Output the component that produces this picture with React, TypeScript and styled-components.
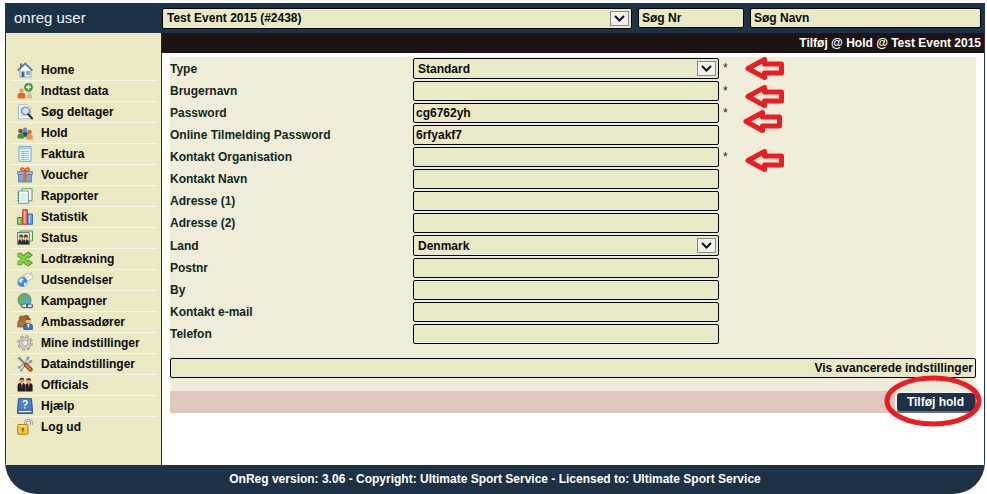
import React, { ReactNode } from "react";
import styled, { createGlobalStyle } from "styled-components";

const color = {
  navy: "#1d3247",
  bar: "#1e1414",
  side: "#ebe8c4",
  field: "#e9e9c5",
  panel: "#efecd9",
  action: "#e0c8be",
  label: "#10281f",
  ink: "#0a0a0a",
  mark: "#ec1c24",
};

const GlobalStyle = createGlobalStyle`
  *, *::before, *::after { box-sizing: border-box; }
  body {
    margin: 0;
    background: #fdfdfe;
    font-family: "Liberation Sans", Arial, sans-serif;
    font-size: 12px;
    font-weight: bold;
    color: ${color.ink};
  }
  input, select, button { font: inherit; color: inherit; }
`;

const Page = styled.div`
  min-height: 100vh;
  padding: 3px 2px 0 5px;
  display: flex;
`;

const Shell = styled.div`
  flex: 1;
  display: flex;
  flex-direction: column;
  background: ${color.navy};
  border-radius: 0 0 32px 32px;
  overflow: hidden;
`;

const Header = styled.header`
  display: grid;
  grid-template-columns: 157px 1fr;
  align-items: center;
  height: 30px;
`;

const Brand = styled.div`
  padding-left: 9px;
  font-size: 15px;
  line-height: 20px;
  font-weight: normal;
  color: #f2f5f8;
`;

const Search = styled.form`
  display: grid;
  grid-template-columns: 470fr 106fr 231fr;
  align-items: center;
  column-gap: 6px;
  padding-right: 4px;
`;

const Body = styled.div`
  flex: 1;
  display: grid;
  grid-template-columns: 155px 1fr;
  column-gap: 1px;
  padding: 0 1px;
`;

const Sidebar = styled.nav`
  background: ${color.side};
  padding: 27px 4px 0;
`;

const MenuList = styled.ul`
  list-style: none;
  margin: 0;
  padding: 0;
`;

const MenuItem = styled.li`
  height: 21px;
  border-bottom: 1px solid #f7f6ea;
  &:last-child { border-bottom: 0; }
`;

const MenuLink = styled.a`
  display: flex;
  align-items: center;
  gap: 8px;
  height: 20px;
  padding-left: 7px;
  color: inherit;
  text-decoration: none;
  white-space: nowrap;
  svg { flex: none; }
`;

const Main = styled.main`
  background: #fff;
`;

const TitleBar = styled.h1`
  margin: 0;
  padding: 0 3px;
  background: ${color.bar};
  color: #fff;
  font-size: 12px;
  line-height: 20px;
  text-align: right;
`;

const TeamForm = styled.form`
  margin: 4px 8px 0;
`;

const Panel = styled.div`
  background: ${color.panel};
  padding: 1px 0 13px;
`;

const Rows = styled.div`
  display: grid;
  gap: 2px;
`;

const Row = styled.div`
  display: grid;
  grid-template-columns: 243fr 306fr 257fr;
  align-items: center;
`;

const Label = styled.label`
  color: ${color.label};
`;

const TextBox = styled.input`
  display: block;
  width: 100%;
  min-width: 0;
  height: 20px;
  padding: 0 2px;
  border: 1px solid #000;
  border-radius: 2px;
  background: ${color.field};
`;

const SearchBox = styled(TextBox)`
  padding: 0 3px;
  &::placeholder { color: inherit; opacity: 1; }
`;

const SelectWrap = styled.div`
  position: relative;
`;

const SelectBox = styled.select`
  appearance: none;
  display: block;
  width: 100%;
  height: 21px;
  padding: 0 24px 0 4px;
  border: 1px solid #000;
  border-radius: 2px;
  background: ${color.field};
`;

const DropButton = styled.span`
  position: absolute;
  top: 3px;
  right: 3px;
  width: 19px;
  height: 15px;
  display: flex;
  align-items: center;
  justify-content: center;
  border: 1px solid #8a8a84;
  background: #f0f0f0;
  pointer-events: none;
`;

const Aside = styled.div`
  position: relative;
  align-self: stretch;
  padding-left: 4px;
  color: ${color.label};
  font-weight: normal;
  line-height: 20px;
`;

const ArrowMark = styled.svg<{ $left: number; $top: number }>`
  position: absolute;
  z-index: 1;
  left: ${(p) => p.$left}px;
  top: ${(p) => p.$top}px;
  pointer-events: none;
`;

const AdvancedButton = styled.button`
  display: block;
  width: 100%;
  height: 20px;
  margin-top: 14px;
  padding: 0 2px;
  border: 1px solid #000;
  border-radius: 2px;
  background: ${color.field};
  text-align: right;
`;

const Actions = styled.div`
  display: flex;
  justify-content: flex-end;
  height: 22px;
  background: ${color.action};
`;

const SubmitWrap = styled.div`
  position: relative;
`;

const Submit = styled.button`
  height: 22px;
  padding: 0 11px 0 10px;
  border: 2px solid;
  border-color: #f4efec #6d7176 #6d7176 #f4efec;
  border-right-width: 1px;
  border-radius: 5px;
  background: ${color.navy};
  color: #fff;
  line-height: 18px;
`;

const RingMark = styled.svg`
  position: absolute;
  top: -16px;
  right: -6px;
  pointer-events: none;
`;

const Footer = styled.footer`
  height: 29px;
  line-height: 28px;
  text-align: center;
  color: #fff;
`;

const Chevron = () => (
  <DropButton>
    <svg width="11" height="7" viewBox="0 0 11 7" aria-hidden="true">
      <path d="M1 1 5.500 5.500 10 1" fill="none" stroke="#111" strokeWidth="2" />
    </svg>
  </DropButton>
);

const icons: Record<string, ReactNode> = {
  home: (
    <>
      <path d="M3 7v8h11V7L8.500 2z" fill="#f7f9fb" stroke="#7f97b0" strokeWidth=".8" />
      <path d="M3 1.500h2V6H3z" fill="#b8543c" />
      <path d="m.7 8.500 7.500-7 7.300 7" fill="none" stroke="#4f84b8" strokeWidth="1.800" />
      <path d="M4.500 9.500h3V15h-3z" fill="#39689c" />
      <path d="M9.500 9.500h3v3h-3z" fill="#7fb2df" stroke="#4f84b8" strokeWidth=".6" />
    </>
  ),
  add: (
    <>
      <circle cx="4.500" cy="7.800" r="2.200" fill="#e0a070" />
      <path d="M.7 15.500V12q0-2 2-2h3.600q2 0 2 2v3.500z" fill="#dc6a2c" />
      <circle cx="12.500" cy="9.200" r="1.900" fill="#ecc9a5" />
      <path d="M10 15.500V13q0-2 2-2h1q2 0 2 2v2.500z" fill="#d9b8a0" />
      <circle cx="11.500" cy="4.300" r="4" fill="#38a637" stroke="#208026" strokeWidth=".6" />
      <path d="M11.500 1.800v5M9 4.300h5" stroke="#fff" strokeWidth="1.600" />
    </>
  ),
  search: (
    <>
      <path d="M1.500.7h9l3 3v11h-12z" fill="#f5f8fb" stroke="#9aacbd" strokeWidth=".8" />
      <path d="M3 4h3M3 6h2M3 8h2M3 10h2M3 12h5" stroke="#b6c5d4" strokeWidth=".7" />
      <circle cx="8.500" cy="7" r="3.900" fill="#cfe4f5" stroke="#7a8da0" strokeWidth="1.300" />
      <path d="m11.300 10.200 3.800 4.300" stroke="#2d3945" strokeWidth="2.200" strokeLinecap="round" />
    </>
  ),
  group: (
    <>
      <circle cx="8" cy="4.800" r="2.200" fill="#5f8ccb" />
      <path d="M5 12V9q0-2.300 2-2.300h2q2 0 2 2.300v3z" fill="#2f5ca8" />
      <circle cx="3.600" cy="6" r="2.300" fill="#805024" />
      <path d="M.5 13.500V11q0-2.500 2-2.500h2.800q2 0 2 2.500v2.500z" fill="#38963b" />
      <circle cx="12.500" cy="7" r="2.200" fill="#c4762c" />
      <path d="M9.200 14.500v-3q0-2.300 2-2.300h2.500q2 0 2 2.300v3z" fill="#ea9145" />
      <circle cx="8.300" cy="9.200" r="1.500" fill="#274687" />
    </>
  ),
  invoice: (
    <>
      <path d="M2 .7h12v14.600H2z" fill="#e7f5fd" stroke="#66a9cf" />
      <path d="M2.500 1.200h11v2.300h-11z" fill="#9fd1ec" />
      <path d="M4 5.500h8M4 7.500h8M4 9.500h8M4 11.500h8M4 13.500h8M6 5v9" stroke="#79b7d9" strokeWidth=".8" />
    </>
  ),
  gift: (
    <>
      <path d="M1.500 7h13v8h-13z" fill="#75a9e0" stroke="#4778b5" strokeWidth=".8" />
      <path d="M.6 4.500h14.800v3H.6z" fill="#8fbbe9" stroke="#4778b5" strokeWidth=".8" />
      <path d="M6.500 4.500h3V15h-3z" fill="#e9682c" />
      <path d="M8 4.500C3 4.500 3 1 5 1s3 2 3 3.500c0-1.500 1-3.500 3-3.500s2 3.500-3 3.500z" fill="#f5b184" stroke="#d9541e" strokeWidth="1.300" />
    </>
  ),
  report: (
    <>
      <path d="M5 .7h10v12H5z" fill="#eef7f2" stroke="#4c8b76" strokeWidth=".9" />
      <path d="M1.500 3h9.800v12.300H1.500z" fill="#fafdff" stroke="#568f7f" strokeWidth=".9" />
      <path d="M3.500 6h6M3.500 8h6M3.500 10h6M3.500 12h6" stroke="#a8ccd5" strokeWidth=".7" />
      <path d="M.5 5h2M.5 7.500h2M.5 10h2M.5 12.500h2" stroke="#4b736a" strokeWidth=".8" />
    </>
  ),
  chart: (
    <>
      <path d="M.6 8.500h4.600v6.800H.6z" fill="#80c85c" stroke="#348b2b" />
      <path d="M5.700.7h4.600v14.600H5.700z" fill="#f47c66" stroke="#cf3025" />
      <path d="M10.800 5h4.600v10.300h-4.600z" fill="#6aa8e8" stroke="#2a62b4" />
      <path d="M2.200 10v4M7.300 2.200V14M12.400 6.500V14" stroke="#fff" strokeOpacity=".6" />
    </>
  ),
  status: (
    <>
      <path d="M3 1h12.500v10H3z" fill="#d8ecc7" stroke="#5b9948" />
      <path d="M.6 2.500h11.800v12H.6z" fill="#e4e2d2" stroke="#63705c" strokeWidth=".9" />
      <circle cx="4.200" cy="6.500" r="2" fill="#4a2c1a" />
      <circle cx="8.800" cy="6.500" r="2" fill="#3c261a" />
      <path d="M3.200 6.500h2v2.500h-2zM7.800 6.500h2v2.500h-2z" fill="#dcaa80" />
      <path d="M1.200 14v-2.500q0-2.500 3-2.500t2.500 2.500V14zM6.700 14v-2.500q0-2.500 2.300-2.500t2.900 2.500V14z" fill="#272b30" />
      <path d="m3.500 9 .7 3 .7-3zM8.200 9l.7 3 .7-3z" fill="#fff" />
    </>
  ),
  shuffle: (
    <g fill="none" strokeLinejoin="round">
      <path d="M.5 4h2.800l6.500 8h2.200M.5 12h2.800l6.500-8h2.200" stroke="#4a9424" strokeWidth="4.600" />
      <path d="M11 .8v6.400L15.500 4zM11 8.800v6.400l4.500-3.200z" fill="#7cc840" stroke="#4a9424" strokeWidth="1" />
      <path d="M1 4h2.300l6.500 8h2.700M1 12h2.300l6.500-8h2.700" stroke="#86cf46" strokeWidth="3" />
    </g>
  ),
  send: (
    <>
      <path d="m5.500 3.500 9-2.800 1 6-8 3z" fill="#fbfcfd" stroke="#a9b2ba" strokeWidth=".8" />
      <path d="m5.800 3.800 5 2L14.500 1" fill="none" stroke="#a9b2ba" strokeWidth=".8" />
      <circle cx="5.500" cy="10" r="5" fill="#3c8ad8" />
      <path d="M1.200 9q1.500-3 4.500-3l1 2-2 1 1 1.500-2 .5z" fill="#c9e5fa" />
      <path d="m7 11 3-1-1 3.500-2 .5z" fill="#d9edfb" />
    </>
  ),
  campaign: (
    <>
      <circle cx="7.500" cy="7" r="6.500" fill="#59a7e2" stroke="#2c72ae" strokeWidth=".8" />
      <path d="M3 2.500Q5.500 0 8 1l1 2-2 1.500 1 2L5 9l1 3-2 .5Q.5 9 1.500 6zM10 2l3 2 .8 4-3-1-1.500-2z" fill="#62b54c" />
      <rect x="4.500" y="11" width="6" height="3.600" rx="1.800" fill="#e9edf0" stroke="#59636e" strokeWidth="1.200" />
      <rect x="9.500" y="11" width="6" height="3.600" rx="1.800" fill="none" stroke="#59636e" strokeWidth="1.200" />
    </>
  ),
  ambassador: (
    <>
      <circle cx="9.200" cy="3.500" r="2.800" fill="#a8642c" />
      <path d="M.7 13V9q0-3 3-3h4q3 0 3 3v4z" fill="#ad7537" stroke="#704317" strokeWidth=".6" />
      <circle cx="4.800" cy="4.500" r="3" fill="#9d6a35" />
      <circle cx="11.300" cy="7" r="2.700" fill="#eabb86" />
      <path d="M8.600 6.500q.5-3 2.700-3t2.700 3q-2.700-1.500-5.400 0z" fill="#91501d" />
      <path d="M6.700 15.500v-3q0-2.700 2.700-2.700h3.500q2.700 0 2.700 2.700v3z" fill="#3972bb" stroke="#214c8c" strokeWidth=".6" />
      <path d="m10 10 1.300 4.500 1.300-4.500z" fill="#f4f7fa" />
    </>
  ),
  gear: (
    <>
      <circle cx="8" cy="8" r="6.500" fill="none" stroke="#8d8f90" strokeWidth="2.600" strokeDasharray="2.550 2.550" />
      <circle cx="8" cy="8" r="4.400" fill="none" stroke="#8d8f90" strokeWidth="3.400" />
      <circle cx="8" cy="8" r="4.400" fill="none" stroke="#d2d3d3" strokeWidth="2" />
      <circle cx="8" cy="8" r="6.500" fill="none" stroke="#c6c7c7" strokeWidth="1.500" strokeDasharray="1.550 3.550" strokeDashoffset="-.5" />
    </>
  ),
  tools: (
    <>
      <path d="m3 13 9-9" stroke="#717b84" strokeWidth="3.600" />
      <path d="M11.500.8 10.200 4l2 2 3-1.200M.8 11.200l3.300.8.3 3.500" fill="none" stroke="#8b959d" strokeWidth="2.400" />
      <path d="m3 13 9-9" stroke="#d8dee3" strokeWidth="2" />
      <path d="m1.500 1.500 6.500 6.500" stroke="#7d8790" strokeWidth="2.400" />
      <path d="m9 9 4.500 4.500" stroke="#8a3e12" strokeWidth="4.400" strokeLinecap="round" />
      <path d="m9 9 4.500 4.500" stroke="#d9813f" strokeWidth="2.200" strokeLinecap="round" />
    </>
  ),
  officials: (
    <>
      <circle cx="4.800" cy="3.500" r="2.500" fill="#d99a68" />
      <path d="M2.500 3Q2.800.5 5 .5T7.300 3Q5 1.800 2.500 3z" fill="#612c14" />
      <circle cx="11.700" cy="3.900" r="2.300" fill="#e3a774" />
      <path d="M9.300 4Q9 1 11.700 1T14 4q-2.500-2-4.700 0z" fill="#7e3515" />
      <path d="M.6 14.500V9q0-3 2.700-3h2.500q2.400 0 2.400 3v5.500zM8.500 14.500V9q0-2.700 2.300-2.700h2.300q2.500 0 2.500 2.700v5.500z" fill="#201d1e" />
      <path d="m4 6 .9 3.500.9-3.500zM11 6.300l.8 3.500.8-3.500z" fill="#fff" />
      <path d="M4.900 7v4M11.800 7.300v3.500" stroke="#cc2f28" strokeWidth=".9" />
    </>
  ),
  help: (
    <>
      <path d="M1.500.6h13l1 11.800v3H.5V12z" fill="#2c5c9e" stroke="#1d437b" strokeWidth=".8" />
      <path d="M2 1h12l.8 10.500H1.200z" fill="#4c82c4" />
      <path d="M1.500 12.800h13v1.500h-13z" fill="#e7eef6" />
      <path d="M6.100 4.300Q6.300 2.700 8.200 2.700t2 1.700q0 1-1.200 1.700t-.9 1.900" fill="none" stroke="#fff" strokeWidth="1.500" />
      <circle cx="8" cy="9.800" r=".9" fill="#fff" />
    </>
  ),
  unlock: (
    <>
      <path d="M8.500 7V4q0-2.900 3-2.900t3 2.900v2" fill="none" stroke="#85898e" strokeWidth="2.400" />
      <path d="M8.500 7V4q0-2.900 3-2.900t3 2.900v2" fill="none" stroke="#d9dcdf" strokeWidth="1.100" />
      <rect x=".7" y="5.500" width="10.300" height="9.800" rx="1" fill="#f4c63d" stroke="#b57f15" />
      <path d="M2 7h7.500" stroke="#fce99b" strokeWidth="1.200" />
      <circle cx="5.800" cy="10" r="1.200" fill="#845a13" />
      <path d="M5.300 10h1v3h-1z" fill="#845a13" />
    </>
  ),
};

const menu: [string, string][] = [
  ["home", "Home"],
  ["add", "Indtast data"],
  ["search", "Søg deltager"],
  ["group", "Hold"],
  ["invoice", "Faktura"],
  ["gift", "Voucher"],
  ["report", "Rapporter"],
  ["chart", "Statistik"],
  ["status", "Status"],
  ["shuffle", "Lodtrækning"],
  ["send", "Udsendelser"],
  ["campaign", "Kampagner"],
  ["ambassador", "Ambassadører"],
  ["gear", "Mine indstillinger"],
  ["tools", "Dataindstillinger"],
  ["officials", "Officials"],
  ["help", "Hjælp"],
  ["unlock", "Log ud"],
];

type Field = {
  id: string;
  label: string;
  value?: string;
  select?: boolean;
  required?: boolean;
  arrow?: [number, number];
};

const fields: Field[] = [
  { id: "type", label: "Type", value: "Standard", select: true, required: true, arrow: [26, -1] },
  { id: "user", label: "Brugernavn", required: true, arrow: [26, 4] },
  { id: "password", label: "Password", value: "cg6762yh", required: true, arrow: [24, 7] },
  { id: "online", label: "Online Tilmelding Password", value: "6rfyakf7" },
  { id: "org", label: "Kontakt Organisation", required: true, arrow: [26, 2] },
  { id: "name", label: "Kontakt Navn" },
  { id: "address1", label: "Adresse (1)" },
  { id: "address2", label: "Adresse (2)" },
  { id: "country", label: "Land", value: "Denmark", select: true },
  { id: "zip", label: "Postnr" },
  { id: "city", label: "By" },
  { id: "email", label: "Kontakt e-mail" },
  { id: "phone", label: "Telefon" },
];

const Arrow = ({ at }: { at: [number, number] }) => (
  <ArrowMark $left={at[0]} $top={at[1]} width="40" height="23" viewBox="0 0 40 23" aria-hidden="true">
    <path
      d="M3 11.500 19.500 2.500V7h17v9h-17v4.500z"
      fill={color.panel}
      stroke={color.mark}
      strokeWidth="5"
      strokeLinejoin="round"
    />
  </ArrowMark>
);

const FormRow = ({ field }: { field: Field }) => (
  <Row>
    <Label htmlFor={field.id}>{field.label}</Label>
    {field.select ? (
      <SelectWrap>
        <SelectBox id={field.id}>
          <option>{field.value}</option>
        </SelectBox>
        <Chevron />
      </SelectWrap>
    ) : (
      <TextBox id={field.id} type="text" defaultValue={field.value} />
    )}
    <Aside>
      {field.required && "*"}
      {field.arrow && <Arrow at={field.arrow} />}
    </Aside>
  </Row>
);

export default function App() {
  return (
    <>
      <GlobalStyle />
      <Page>
        <Shell>
          <Header>
            <Brand>onreg user</Brand>
            <Search>
              <SelectWrap>
                <SelectBox aria-label="Event">
                  <option>Test Event 2015 (#2438)</option>
                </SelectBox>
                <Chevron />
              </SelectWrap>
              <SearchBox type="text" aria-label="Søg Nr" placeholder="Søg Nr" />
              <SearchBox type="text" aria-label="Søg Navn" placeholder="Søg Navn" />
            </Search>
          </Header>
          <Body>
            <Sidebar>
              <MenuList>
                {menu.map(([icon, text]) => (
                  <MenuItem key={icon}>
                    <MenuLink href="#">
                      <svg width="16" height="16" viewBox="0 0 16 16" aria-hidden="true">
                        {icons[icon]}
                      </svg>
                      {text}
                    </MenuLink>
                  </MenuItem>
                ))}
              </MenuList>
            </Sidebar>
            <Main>
              <TitleBar>Tilføj @ Hold @ Test Event 2015</TitleBar>
              <TeamForm>
                <Panel>
                  <Rows>
                    {fields.map((field) => (
                      <FormRow key={field.id} field={field} />
                    ))}
                  </Rows>
                  <AdvancedButton type="button">Vis avancerede indstillinger</AdvancedButton>
                </Panel>
                <Actions>
                  <SubmitWrap>
                    <Submit type="button">Tilføj hold</Submit>
                    <RingMark width="98" height="52" viewBox="0 0 98 52" aria-hidden="true">
                      <ellipse cx="49" cy="26" rx="46" ry="23" fill="none" stroke={color.mark} strokeWidth="5" />
                    </RingMark>
                  </SubmitWrap>
                </Actions>
              </TeamForm>
            </Main>
          </Body>
          <Footer>OnReg version: 3.06 - Copyright: Ultimate Sport Service - Licensed to: Ultimate Sport Service</Footer>
        </Shell>
      </Page>
    </>
  );
}
